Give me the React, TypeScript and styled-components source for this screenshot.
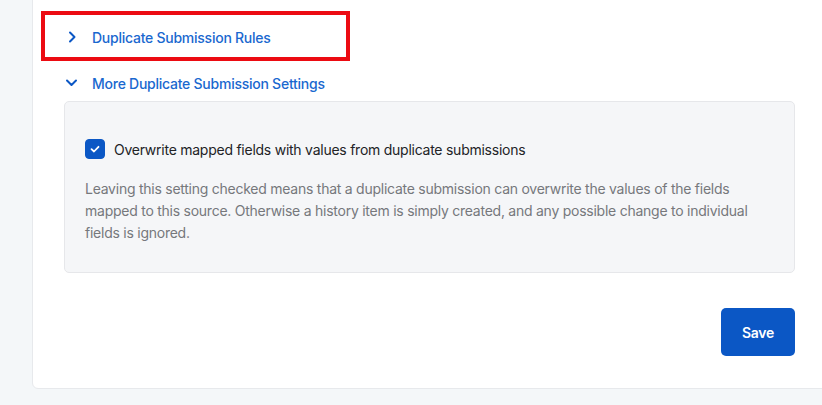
import React, { useState } from 'react'
import styled, { createGlobalStyle } from 'styled-components'

const GlobalStyle = createGlobalStyle`
  html, body {
    margin: 0;
    padding: 0;
    background: #f4f7f9;
    overflow: hidden;
    font-family: Inter, "Noto Sans", "Liberation Sans", sans-serif;
    letter-spacing: -0.25px;
    -webkit-font-smoothing: antialiased;
  }
`

const Page = styled.div`
  width: 822px;
  height: 405px;
  padding: 0 0 16px 32px;
  box-sizing: border-box;
  display: flex;
  flex-direction: column;
`

const Card = styled.section`
  flex: 1;
  margin: -10px -10px 0 0;
  padding: 35px 36px 32px 31px;
  background: #fff;
  border: 1px solid #e7e9ec;
  border-radius: 6px;
  display: flex;
  flex-direction: column;
`

const SectionHeader = styled.button`
  position: relative;
  display: flex;
  align-items: center;
  gap: 12px;
  height: 22px;
  padding: 0;
  border: none;
  background: none;
  cursor: pointer;
  font-family: inherit;
  letter-spacing: inherit;
  font-size: 14px;
  font-weight: 500;
  color: #1a68cf;
  text-align: left;

  & + & {
    margin-top: 24px;
  }
`

const Highlight = styled.span`
  position: absolute;
  left: -23px;
  top: -15px;
  width: 309px;
  height: 50px;
  box-sizing: border-box;
  border: 4px solid #ec0b12;
  pointer-events: none;
`

const Chevron = styled.svg`
  width: 16px;
  height: 16px;
  flex-shrink: 0;
  color: #0b57c5;
`

const SettingsPanel = styled.div`
  margin-top: 7px;
  padding: 37px 20px 28px;
  background: #f5f6f8;
  border: 1px solid #e6e7ea;
  border-radius: 5px;
`

const CheckRow = styled.label`
  display: flex;
  align-items: center;
  gap: 9px;
  cursor: pointer;
  font-size: 14px;
  color: #222326;
`

const CheckBox = styled.span<{ checked: boolean }>`
  width: 20px;
  height: 20px;
  border-radius: 4px;
  display: flex;
  align-items: center;
  justify-content: center;
  box-sizing: border-box;
  background: ${({ checked }) => (checked ? '#0b57c5' : '#fff')};
  border: 1px solid ${({ checked }) => (checked ? '#0b57c5' : '#b8bcc4')};
`

const Description = styled.p`
  margin: 19px 0 0;
  font-size: 14px;
  line-height: 22px;
  color: #76787c;
`

const Footer = styled.div`
  display: flex;
  justify-content: flex-end;
  margin-top: 35px;
`

const SaveButton = styled.button`
  width: 74px;
  height: 48px;
  border: none;
  border-radius: 5px;
  background: #0b57c5;
  color: #fff;
  font-family: inherit;
  letter-spacing: inherit;
  font-size: 14px;
  font-weight: 600;
  cursor: pointer;
`

const ChevronRight = () => (
  <Chevron viewBox="0 0 16 16" fill="none">
    <path d="M6 3.5 L10.5 8 L6 12.5" stroke="currentColor" strokeWidth="2" strokeLinecap="round" strokeLinejoin="round" />
  </Chevron>
)

const ChevronDown = () => (
  <Chevron viewBox="0 0 16 16" fill="none">
    <path d="M3 5.5 L7.5 10 L12 5.5" stroke="currentColor" strokeWidth="2" strokeLinecap="round" strokeLinejoin="round" />
  </Chevron>
)

const App = () => {
  const [rulesOpen, setRulesOpen] = useState(false)
  const [moreOpen, setMoreOpen] = useState(true)
  const [overwrite, setOverwrite] = useState(true)

  return (
    <Page>
      <GlobalStyle />
      <Card>
        <SectionHeader onClick={() => setRulesOpen(!rulesOpen)}>
          <Highlight />
          {rulesOpen ? <ChevronDown /> : <ChevronRight />}
          Duplicate Submission Rules
        </SectionHeader>
        <SectionHeader onClick={() => setMoreOpen(!moreOpen)}>
          {moreOpen ? <ChevronDown /> : <ChevronRight />}
          More Duplicate Submission Settings
        </SectionHeader>

        {moreOpen && (
          <SettingsPanel>
            <CheckRow onClick={() => setOverwrite(!overwrite)}>
              <CheckBox checked={overwrite}>
                {overwrite && (
                  <svg width="12" height="12" viewBox="0 0 12 12" fill="none">
                    <path d="M2.5 6.2 L5 8.5 L9.5 3.8" stroke="#fff" strokeWidth="1.8" strokeLinecap="round" strokeLinejoin="round" />
                  </svg>
                )}
              </CheckBox>
              Overwrite mapped fields with values from duplicate submissions
            </CheckRow>
            <Description>
              Leaving this setting checked means that a duplicate submission can overwrite the values of the fields
              mapped to this source. Otherwise a history item is simply created, and any possible change to individual
              fields is ignored.
            </Description>
          </SettingsPanel>
        )}

        <Footer>
          <SaveButton>Save</SaveButton>
        </Footer>
      </Card>
    </Page>
  )
}

export default App
